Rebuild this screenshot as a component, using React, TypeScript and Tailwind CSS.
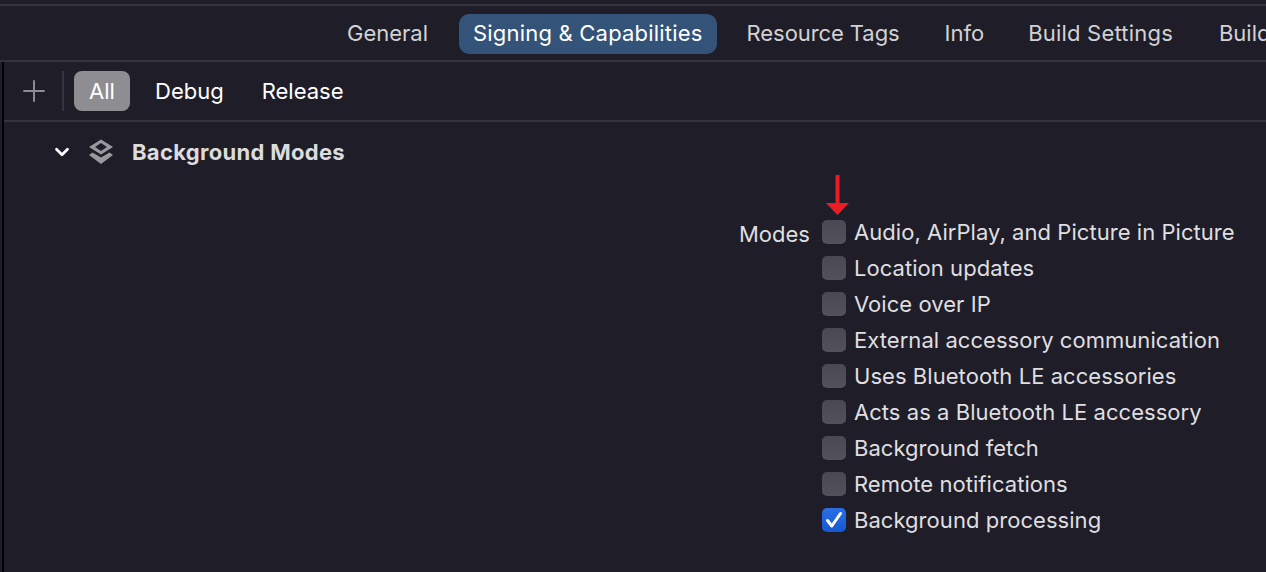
import { ChevronDown, Plus } from "lucide-react";

const tabs = [
  { name: "General", className: "mr-px" },
  { name: "Signing & Capabilities", className: "" },
  { name: "Resource Tags", className: "mr-px tracking-[-0.08px]" },
  { name: "Info", className: "" },
  { name: "Build Settings", className: "mr-[2px] tracking-[0.2px]" },
  { name: "Build Phases", className: "" },
];
const modes = [
  "Audio, AirPlay, and Picture in Picture",
  "Location updates",
  "Voice over IP",
  "External accessory communication",
  "Uses Bluetooth LE accessories",
  "Acts as a Bluetooth LE accessory",
  "Background fetch",
  "Remote notifications",
  "Background processing",
];

function ModeRow({ label, checked }: { label: string; checked: boolean }) {
  return (
    <div className="flex h-9 items-center gap-2">
      {checked ? (
        <span className="flex h-6 w-6 items-center justify-center rounded-[5px] bg-gradient-to-b from-[#2a6fe6] to-[#1559d0]">
          <svg width="24" height="24" viewBox="0 0 24 24" fill="none">
            <path d="M5.5 12.5 9.8 18 18.5 5.5" stroke="white" strokeWidth="3" strokeLinecap="round" strokeLinejoin="round" />
          </svg>
        </span>
      ) : (
        <span className="h-6 w-6 rounded-[5px] bg-gradient-to-b from-[#4a4953] to-[#53525b]" />
      )}
      <span className="text-[22px] tracking-[0.05px] text-[#dfdfe1]">{label}</span>
    </div>
  );
}

export default function App() {
  return (
    <div className="h-[572px] w-[1266px] overflow-hidden bg-[#1f1e28] font-['Inter',sans-serif]">
      <div className="h-[6px] border-b-2 border-[#35343c]" />

      {/* tabs */}
      <div className="flex h-[56px] items-center gap-4 whitespace-nowrap border-b-2 border-[#35343c] pl-[333px] pt-px text-[22px]">
        {tabs.map((t) =>
          t.name === "Signing & Capabilities" ? (
            <span key={t.name} className="flex h-10 items-center rounded-[10px] bg-[#345378] px-3.5 tracking-[0.2px] text-white">
              {t.name}
            </span>
          ) : (
            <span key={t.name} className={`px-3.5 text-[#d2d2d5] ${t.className}`}>
              {t.name}
            </span>
          ),
        )}
      </div>

      <div className="ml-[2px] h-[510px] border-l-2 border-black">
        {/* filter bar */}
        <div className="flex h-[60px] items-center border-b-2 border-[#35343c] pl-[13px] text-[22px] text-white">
          <Plus size={34} strokeWidth={1.4} className="text-[#8d8c91]" />
          <div className="ml-[11px] mr-[10px] h-10 w-[2px] bg-[#35343c]" />
          <span className="flex h-10 w-14 items-center justify-center rounded-[8px] bg-[#8e8d92]">All</span>
          <span className="ml-[25px]">Debug</span>
          <span className="ml-[38px]">Release</span>
        </div>

        {/* capability header */}
        <div className="flex h-[60px] items-center pl-[47px]">
          <ChevronDown size={22} strokeWidth={3} className="text-white" />
          <svg width="24" height="26" viewBox="0 0 24 26" className="ml-[16px]">
            <path d="M12 .5 24 8 12 15.5 0 8Z M12 4 6 8 12 12 18 8Z" fill="#9a999e" fillRule="evenodd" />
            <path d="M3.500 13.500 12 18.500 20.500 13.500 24 16 12 25 0 16Z" fill="#9a999e" />
          </svg>
          <span className="ml-[19px] text-[22px] font-bold tracking-[0.3px] text-[#dcdcde]">Background Modes</span>
        </div>

        {/* modes */}
        <div className="flex pl-[735px] pt-[32px]">
          <span className="mt-[2px] text-[22px] leading-9 text-[#dfdfe1]">Modes</span>
          <div className="relative ml-[12px]">
            <svg width="23" height="40" viewBox="0 0 23 40" className="absolute left-[4px] top-[-39px]">
              <path d="M9.500 0h4v29h-4z M0 28h23L11.500 40Z" fill="#ea1c24" />
            </svg>
            {modes.map((m) => (
              <ModeRow key={m} label={m} checked={m === "Background processing"} />
            ))}
          </div>
        </div>
      </div>
    </div>
  );
}
